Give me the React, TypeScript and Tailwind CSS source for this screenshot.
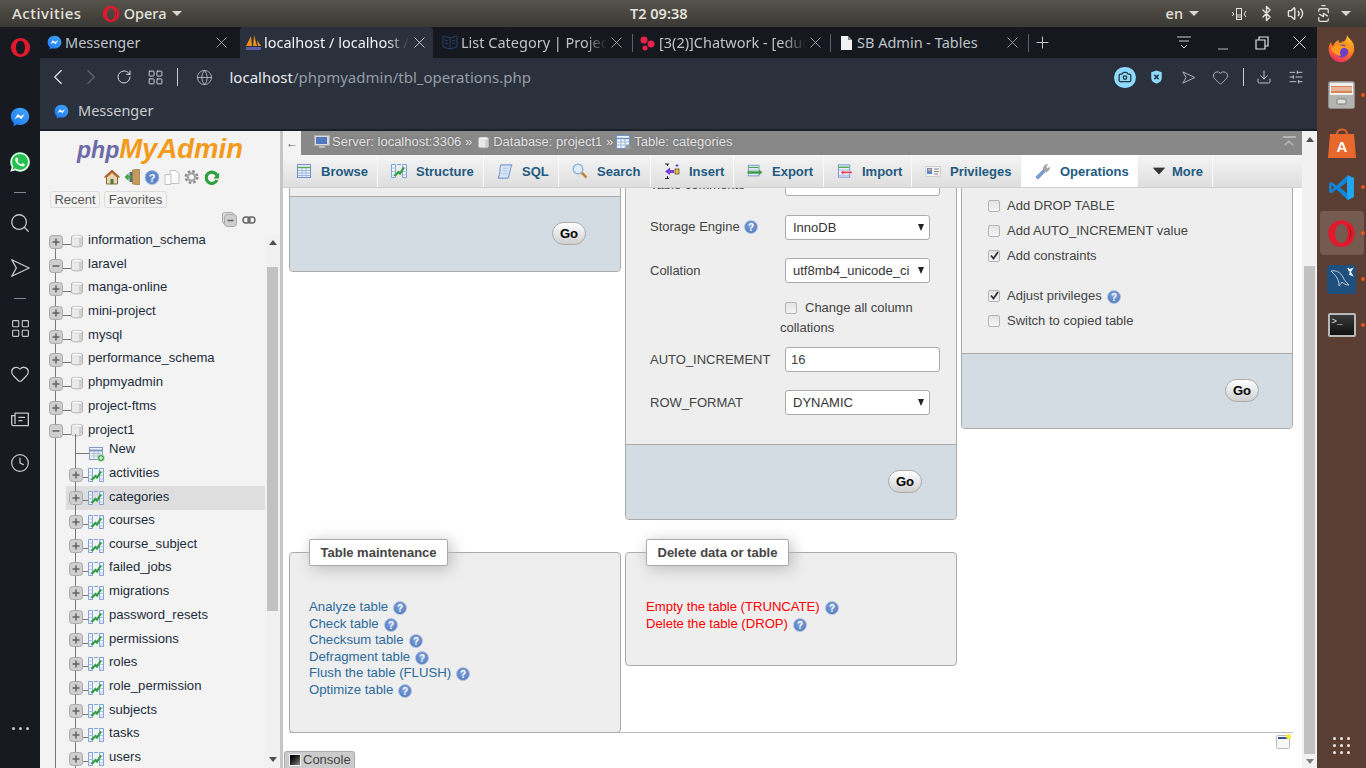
import React from "react";
import {BatteryCharging, Bluetooth, Camera, ChevronLeft, ChevronRight, ChevronUp, Clock4, Download, Globe, Heart, LayoutGrid, Minus, Plus, RotateCw, Search, SlidersHorizontal, Volume2, X} from "lucide-react";
import {FaWhatsapp} from "react-icons/fa";

const Opera = ({size, hole = false}: {size: number; hole?: boolean}) => (
    <svg width={size} height={size} viewBox="0 0 24 24" className="shrink-0">
        <path fillRule="evenodd" fill="#e0192d" d="M12 1a11 11 0 1 0 0 22a11 11 0 1 0 0-22zM12 4.2c-3.2 0-5.2 3.6-5.2 7.8s2 7.8 5.2 7.8 5.2-3.6 5.2-7.8-2-7.8-5.2-7.8z"/>
        {hole && <path fill="#a80f20" d="M17 4.5c2 2 3.2 4.5 3.2 7.5s-1.200 5.500-3.200 7.500c1.500-2 2-4.500 2-7.500s-.5-5.500-2-7.500z"/>}
    </svg>
);

const MessengerIcon = ({size}: {size: number}) => (
    <svg width={size} height={size} viewBox="0 0 24 24" className="shrink-0">
        <defs>
            <linearGradient id="msg" x1="0" y1="1" x2="0.8" y2="0">
                <stop offset="0" stopColor="#1e78f5"/>
                <stop offset="1" stopColor="#3fa2fb"/>
            </linearGradient>
        </defs>
        <path fill="url(#msg)" d="M12 1C5.800 1 1 5.500 1 11.400c0 3.100 1.300 5.700 3.400 7.500V23l3.600-2c1.300.4 2.600.6 4 .6 6.200 0 11-4.500 11-10.200S18.200 1 12 1z"/>
        <path fill="#fff" d="M5.400 14.600l4-6.200 3.400 2.700 4.800-2.700-4 6.200-3.400-2.700z"/>
    </svg>
);

const SendIcon = ({size, color}: {size: number; color: string}) => (
    <svg width={size} height={size} viewBox="0 0 24 24" fill="none" stroke={color} strokeWidth="1.500" strokeLinejoin="round" className="shrink-0">
        <path d="M3 3l19 9-19 9 5-9z"/>
    </svg>
);

const NewsIcon = () => (
    <svg width="20" height="20" viewBox="0 0 24 24" fill="none" stroke="#c3c7cd" strokeWidth="1.600" strokeLinejoin="round">
        <path d="M6 5h16v15H4a2 2 0 0 1-2-2V8h4zM6 8v10"/>
        <path d="M10 10h8M10 14h5"/>
    </svg>
);

const SideSep = () => <div className="w-3 h-px bg-[#7e8794]"/>;

const LeftRail = () => (
    <div className="w-10 shrink-0 bg-[#171b21] flex flex-col items-center">
        <div className="mt-[10px]"><Opera size={21}/></div>
        <div className="mt-[49px]"><MessengerIcon size={20}/></div>
        <div className="mt-[25px] w-[20px] h-[20px] rounded-full bg-[#25c04d] flex items-center justify-center">
            <FaWhatsapp size={22} color="#f4f4f4" className="shrink-0"/>
        </div>
        <div className="mt-[20px]"><SideSep/></div>
        <Search size={22} color="#c3c7cd" strokeWidth={1.4} className="mt-[19px]"/>
        <div className="mt-[23px]"><SendIcon size={22} color="#c3c7cd"/></div>
        <div className="mt-[19px]"><SideSep/></div>
        <LayoutGrid size={21} color="#c3c7cd" strokeWidth={1.3} className="mt-[18.500px]"/>
        <Heart size={20} color="#c3c7cd" strokeWidth={1.5} className="mt-[25.500px]"/>
        <div className="mt-[25px]"><NewsIcon/></div>
        <Clock4 size={20} color="#c3c7cd" strokeWidth={1.5} className="mt-[24px]"/>
        <div className="mt-[254px] flex gap-[4px]">
            <span className="w-[3px] h-[3px] rounded-full bg-[#c3c7cd]"/>
            <span className="w-[3px] h-[3px] rounded-full bg-[#c3c7cd]"/>
            <span className="w-[3px] h-[3px] rounded-full bg-[#c3c7cd]"/>
        </div>
    </div>
);

const PmaSail = () => (
    <svg width="17" height="17" viewBox="0 0 17 17" className="shrink-0">
        <path fill="#e8901c" d="M1 12L6 2l1 10zM8 12l1-11 3 11zM13 12l-1-6 4 6z"/>
        <path fill="#5a5fa0" d="M1 13h15v3H1z"/>
    </svg>
);

const BookIcon = () => (
    <svg width="17" height="17" viewBox="0 0 17 17" fill="none" stroke="#26406e" strokeWidth="1" className="shrink-0">
        <path d="M1 2l7 2 7-2v11l-7 2-7-2zM8 4v11M3 6l3 1M3 9l3 1M10 7l3-1M10 10l3-1"/>
    </svg>
);

const ChatworkIcon = () => (
    <svg width="16" height="16" viewBox="0 0 16 16" className="shrink-0">
        <circle cx="4" cy="5" r="3.500" fill="#e8234a"/>
        <circle cx="11" cy="9" r="3.500" fill="#e8234a"/>
        <circle cx="5" cy="13" r="2.500" fill="#e8234a"/>
    </svg>
);

const FileIcon = () => (
    <svg width="11" height="14" viewBox="0 0 11 14" className="shrink-0">
        <path fill="#f1f2f3" d="M0 0h7l4 4v10H0z"/>
        <path fill="#15181e" d="M7 0v4h4z" opacity=".5"/>
    </svg>
);

type TabProps = {width: string; icon: React.ReactNode; title: string; active?: boolean; sep?: boolean; gap: string; pad: string; textW: string; fade?: boolean};

const Tab = ({width, icon, title, active, sep, gap, pad, textW, fade = true}: TabProps) => (
    <div className={`${width} ${pad} h-full shrink-0 flex items-center ${active ? "bg-[#2a303c] rounded-t-[4px]" : ""} relative`}>
        {icon}
        <span className={`${gap} ${textW} overflow-hidden whitespace-nowrap text-[14.500px] ${active ? "text-[#f1f2f4]" : "text-[#bfc3c9]"} ${fade ? "[mask-image:linear-gradient(90deg,#000_85%,transparent)]" : ""}`}>{title}</span>
        <X size={19} strokeWidth={1} color={active ? "#e8eaec" : "#b5b9c0"} className="ml-auto -mr-[2px] shrink-0"/>
        {sep && <span className="absolute right-0 top-[7px] h-[18px] w-px bg-[#5b6069]"/>}
    </div>
);

const TabStrip = () => (
    <div className="h-[31px] shrink-0 bg-[#15181e] flex items-center">
        <Tab width="w-[200px]" pad="pl-[7px] pr-[11px]" gap="ml-[3px]" textW="w-[80px]" icon={<MessengerIcon size={15}/>} title="Messenger" fade={false}/>
        <Tab width="w-[193px]" pad="pl-[5px] pr-[6px]" gap="ml-[2px]" textW="w-[145px]" icon={<PmaSail/>} title="localhost / localhost / project1" active/>
        <Tab width="w-[200px]" pad="pl-[9px] pr-[9px]" gap="ml-[2px]" textW="w-[146px]" icon={<BookIcon/>} title="List Category | Project1" sep/>
        <Tab width="w-[198px]" pad="pl-[7px] pr-[8px]" gap="ml-[3px]" textW="w-[147px]" icon={<ChatworkIcon/>} title="[3(2)]Chatwork - [education]" sep/>
        <Tab width="w-[198px]" pad="pl-[10px] pr-[9px]" gap="ml-[5px]" textW="w-[130px]" icon={<FileIcon/>} title="SB Admin - Tables" sep fade={false}/>
        <Plus size={19} strokeWidth={1.1} color="#dfe1e4" className="ml-[4px]"/>
        <div className="ml-auto flex items-center pr-[6.500px]">
            <svg width="16" height="16" viewBox="0 0 16 16" fill="none" stroke="#c9ccd1" strokeWidth="1">
                <path d="M1 2h14M3 6h10M5 10l3 3 3-3"/>
            </svg>
            <Minus size={16} strokeWidth={1.2} color="#dfe1e4" className="ml-[23px] translate-y-[6px]"/>
            <svg width="14" height="14" viewBox="0 0 14 14" fill="none" stroke="#dfe1e4" strokeWidth="1.200" className="ml-[24px]">
                <path d="M1 4h9v9H1zM4 4V1h9v9h-3"/>
            </svg>
            <X size={23} strokeWidth={1} color="#e8eaec" className="ml-[18.500px]"/>
        </div>
    </div>
);

const AddressBar = () => (
    <div className="h-[38px] shrink-0 flex items-center">
        <ChevronLeft size={26} strokeWidth={1.1} color="#e3e5e8" className="ml-[5px]"/>
        <ChevronRight size={26} strokeWidth={1.1} color="#5f6672" className="ml-[7px]"/>
        <RotateCw size={16} strokeWidth={1.4} color="#e3e5e8" className="ml-[12px]"/>
        <LayoutGrid size={17} strokeWidth={1.2} color="#e3e5e8" className="ml-[14.500px]"/>
        <span className="ml-[13.500px] w-px h-[18px] bg-[#c8ccd2]"/>
        <Globe size={17} strokeWidth={1.1} color="#c5c9cf" className="ml-[18px]"/>
        <span className="ml-[16.500px] text-[15px] whitespace-nowrap text-[#e9ebee]">localhost<span className="text-[#969ca6]">/phpmyadmin/tbl_operations.php</span></span>
        <div className="ml-auto flex items-center pr-[13px]">
            <span className="w-[22px] h-[21px] rounded-full bg-[#8edbff] flex items-center justify-center">
                <Camera size={14} strokeWidth={2.2} color="#26313f"/>
            </span>
            <span className="ml-[14.500px] flex">
                <svg width="13" height="14" viewBox="0 0 14 16"><path fill="#8edbff" d="M7 .5l6 2v6.500c0 3.500-3 5.500-6 6.500-3-1-6-3-6-6.500V2.500z"/><path stroke="#26313f" strokeWidth="1.800" d="M4.500 5.500l5 5M9.500 5.500l-5 5"/></svg>
            </span>
            <span className="ml-[18px] flex"><SendIcon size={15} color="#b4b9c1"/></span>
            <Heart size={17} strokeWidth={1.1} color="#c9ccd1" className="ml-[16px]"/>
            <span className="ml-[14px] w-px h-[18px] bg-[#c8ccd2]"/>
            <Download size={16} strokeWidth={1.2} color="#e3e5e8" className="ml-[11.500px]"/>
            <SlidersHorizontal size={16} strokeWidth={1.2} color="#e3e5e8" className="ml-[16.500px]"/>
        </div>
    </div>
);

const BookmarkBar = () => (
    <div className="h-[34px] shrink-0 flex items-center pl-[14px] pb-[4px]">
        <MessengerIcon size={15}/>
        <span className="ml-[9px] text-[14.500px] text-[#c9ccd1]">Messenger</span>
    </div>
);

const PlusBox = ({open}: {open?: boolean}) => (
    <svg width="14" height="14" viewBox="0 0 14 14" className="shrink-0 relative">
        <rect x=".5" y=".5" width="13" height="13" rx="3" fill="#cfcfcf" stroke="#a9a9a9"/>
        <path d="M3.500 7h7" stroke="#666" strokeWidth="1.600"/>
        {!open && <path d="M7 3.500v7" stroke="#666" strokeWidth="1.600"/>}
    </svg>
);

const DbIcon = ({size = 12}: {size?: number}) => (
    <svg width={size} height={size + 2} viewBox="0 0 12 14" className="shrink-0 relative">
        <path d="M.5 2.500C.5 1.200 11.500 1.200 11.500 2.500v9c0 1.800-11 1.800-11 0z" fill="#eaeaea" stroke="#b5b5b5"/>
        <ellipse cx="6" cy="2.700" rx="5" ry="1.500" fill="#fafafa" stroke="#c5c5c5" strokeWidth=".6"/>
        <path d="M8 4v8l3-.6V4z" fill="#cfcfcf"/>
    </svg>
);

const StructIcon = ({size = 16}: {size?: number}) => (
    <svg width={size} height={size} viewBox="0 0 16 16" className="shrink-0 relative">
        <path d="M.5 1.500h4v13h-4zM11.500 1.500h4v13h-4z" fill="#f4f8ff" stroke="#7ea0d8"/>
        <path d="M.5 5h4M.5 8.500h4M.5 12h4M11.500 5h4M11.500 8.500h4M11.500 12h4" stroke="#a9c0e4"/>
        <path d="M6 1.500h4" stroke="#7ea0d8"/>
        <path d="M3.500 13l4-4 1.500 1.500 4-6" fill="none" stroke="#2f9e3f" strokeWidth="2.200"/>
    </svg>
);

const NewTableIcon = () => (
    <svg width="16" height="16" viewBox="0 0 16 16" className="shrink-0 relative">
        <rect x=".5" y="1.500" width="13" height="12" fill="#f2f5fb" stroke="#7f98c4"/>
        <path d="M.5 4.500h13" stroke="#7f98c4" strokeWidth="2"/>
        <path d="M2 7.500h10M2 10h10M5 5v8M9 5v8" stroke="#aab9d3"/>
        <circle cx="12" cy="12" r="3.500" fill="#35a24a" stroke="#e8f5ea" strokeWidth=".6"/>
        <path d="M10 12h4M12 10v4" stroke="#fff" strokeWidth="1"/>
    </svg>
);

const LINE = "absolute w-px bg-[#777]";

type TreeRowProps = {name: string; open?: boolean; first?: boolean};

const DbRow = ({name, open, first}: TreeRowProps) => (
    <div className="relative h-[23.7px] flex items-center pl-[9px]">
        <span className={`${LINE} left-[15px] bottom-0 ${first ? "top-[50%]" : "top-0"}`}/>
        <span className="absolute left-[20px] top-[15px] h-px w-[12px] bg-[#777]"/>
        <div className="flex items-center translate-y-[1px]"><PlusBox open={open}/></div>
        <span className="ml-[8px]"><DbIcon/></span>
        <span className="ml-[5px] -translate-y-[1px] text-[13.100px] text-[#1d2b3a] whitespace-nowrap">{name}</span>
    </div>
);

const TableRow = ({name, active}: {name: string; active?: boolean}) => (
    <div className="relative h-[23.7px] flex items-center pl-[29px]">
        <span className={`${LINE} left-[15px] top-0 bottom-0`}/>
        {active && <span className="absolute left-[26px] right-0 top-[1px] -bottom-[1px] bg-[#dedede]"/>}
        <span className={`${LINE} left-[35px] top-0 bottom-0`}/>
        <span className="absolute left-[40px] top-[15px] h-px w-[10px] bg-[#777]"/>
        <div className="flex items-center translate-y-[1px]"><PlusBox/></div>
        <span className="ml-[5px] translate-y-[1px]"><StructIcon/></span>
        <span className={`relative ml-[5px] ${active ? "" : "-translate-y-[1px]"} text-[13.100px] text-[#1d2b3a] whitespace-nowrap`}>{name}</span>
    </div>
);

const NavScrollbar = () => (
    <div className="w-[15px] shrink-0 bg-[#f1f1f1] flex flex-col items-center">
        <span className="mt-[5px] w-0 h-0 border-x-[4px] border-x-transparent border-b-[5px] border-b-[#505050]"/>
        <div className="mt-[22px] w-[11px] h-[344px] bg-[#c1c1c1]"/>
        <span className="mt-[146px] w-0 h-0 border-x-[4px] border-x-transparent border-t-[5px] border-t-[#505050]"/>
    </div>
);

const NavToolbar = () => (
    <div className="mt-[5px] flex items-center h-[16px] translate-x-[1.500px]">
        <svg width="17" height="16" viewBox="0 0 17 16"><path d="M8.500 1L1 8h2v7h11V8h2z" fill="#e6d5b0" stroke="#8a6a3a"/><path d="M8.500 1L1 8h3l4.500-4L13 8h3z" fill="#b8642c"/><path d="M7 10h3v5H7z" fill="#4f7a3a"/></svg>
        <svg width="17" height="16" viewBox="0 0 17 16" className="ml-[3px]"><path d="M9 1l7-1v16l-7-1z" fill="#c89a5a" stroke="#8a6a3a" strokeWidth=".6"/><path d="M9 3H6v10h3" fill="#5a6a7a"/><path d="M1 8l4-4v2.500h3v3H5V12z" fill="#46a648"/></svg>
        <svg width="15" height="15" viewBox="0 0 15 15" className="ml-[4px]"><circle cx="7.500" cy="7.500" r="7" fill="#5f86c8" stroke="#a9bfe2"/><text x="7.500" y="11.500" textAnchor="middle" fontSize="11" fontWeight="700" fill="#fff" fontFamily="Liberation Sans">?</text></svg>
        <svg width="17" height="17" viewBox="0 0 17 17" className="ml-[4px]" fill="#fafafa" stroke="#c2c2c2"><path d="M6.500 1.500h6l3 3v10h-9z"/><path d="M1.500 5.500h6v10h-6z"/></svg>
        <svg width="16" height="16" viewBox="0 0 24 24" className="ml-[3px]" fill="none"><circle cx="12" cy="12" r="8" stroke="#8c8c8c" strokeWidth="5" strokeDasharray="3.500 2.800"/><circle cx="12" cy="12" r="5.500" stroke="#a8a8a8" strokeWidth="3.500"/></svg>
        <svg width="15" height="15" viewBox="0 0 24 24" className="ml-[5px]" fill="none" stroke="#2e9f3e" strokeWidth="5"><path d="M20 9a9 9 0 1 0 0 7"/><path fill="#2e9f3e" strokeWidth="1" d="M23 5v8h-8z"/></svg>
    </div>
);

const NavPanel = () => (
    <div className="w-[240px] shrink-0 bg-[#f3f3f3] flex flex-col overflow-hidden">
        <div className="h-[104px] shrink-0 flex flex-col items-center font-['Liberation_Sans',Arial,sans-serif]">
            <div className="mt-[1px] h-[32px] flex items-baseline pt-[3px] font-bold italic leading-none whitespace-nowrap">
                <span className="text-[23px] text-[#6c6aa8]">php</span>
                <span className="text-[27.500px] text-[#f49a1a]">MyAdmin</span>
            </div>
            <NavToolbar/>
            <div className="self-start ml-[10px] mt-[6px] flex gap-1 text-[13px] text-[#555] leading-none">
                <span className="h-[17px] w-[50px] flex items-center justify-center border border-[#dcdcdc] rounded-[3px]">Recent</span>
                <span className="h-[17px] w-[63px] flex items-center justify-center border border-[#dcdcdc] rounded-[3px]">Favorites</span>
            </div>
            <div className="self-end mr-[24px] mt-[4px] flex items-center gap-[5px]">
                <svg width="15" height="15" viewBox="0 0 15 15"><rect x=".5" y=".5" width="11" height="11" rx="2" fill="#ddd" stroke="#aaa"/><rect x="2.500" y="2.500" width="12" height="12" rx="3" fill="#cfcfcf" stroke="#a9a9a9"/><path d="M5.500 8.500h6" stroke="#666" strokeWidth="1.600"/></svg>
                <svg width="14" height="8" viewBox="0 0 14 8" fill="none" stroke="#666" strokeWidth="1.500"><rect x="1" y="1" width="7" height="6" rx="3"/><rect x="6" y="1" width="7" height="6" rx="3"/></svg>
            </div>
        </div>
        <div className="flex-1 flex min-h-0 font-['Liberation_Sans',Arial,sans-serif]">
            <div className="flex-1 -mt-[6px] overflow-hidden">
                <DbRow name="information_schema" first/>
                <DbRow name="laravel" open/>
                <DbRow name="manga-online"/>
                <DbRow name="mini-project"/>
                <DbRow name="mysql"/>
                <DbRow name="performance_schema"/>
                <DbRow name="phpmyadmin"/>
                <DbRow name="project-ftms"/>
                <DbRow name="project1" open/>
                <div className="relative h-[19.500px] flex items-center pl-[49px]">
                    <span className={`${LINE} left-[15px] top-0 bottom-0`}/>
                    <span className={`${LINE} left-[35px] top-[-8px] bottom-0`}/>
                    <span className="absolute left-[35px] top-[11px] h-px w-[14px] bg-[#777]"/>
                    <span className="translate-y-[2px]"><NewTableIcon/></span>
                    <span className="ml-[4px] -translate-y-[3px] text-[13.100px] text-[#1d2b3a]">New</span>
                </div>
                {["activities", "categories", "courses", "course_subject", "failed_jobs", "migrations", "password_resets", "permissions", "roles", "role_permission", "subjects", "tasks", "users"].map(t => (
                    <TableRow key={t} name={t} active={t === "categories"}/>
                ))}
            </div>
            <NavScrollbar/>
        </div>
    </div>
);

const PmaHelp = () => (
    <svg width="14" height="14" viewBox="0 0 14 14" className="shrink-0">
        <defs>
            <radialGradient id="hlp" cx="0.5" cy="0.4" r="0.6">
                <stop offset="0" stopColor="#8aa9dd"/>
                <stop offset="1" stopColor="#4f78bd"/>
            </radialGradient>
        </defs>
        <circle cx="7" cy="7" r="6.500" fill="url(#hlp)" stroke="#b5c6e4"/>
        <text x="7" y="10.500" textAnchor="middle" fontSize="10" fontWeight="700" fill="#fff" fontFamily="Liberation Sans">?</text>
    </svg>
);

const MI = {
    browse: <svg width="16" height="16" viewBox="0 0 16 16"><rect x="1.500" y="1.500" width="13" height="13" fill="#eef3fb" stroke="#6f92cc"/><path d="M2 4.500h12" stroke="#58a55c" strokeWidth="1.500"/><path d="M2 7.500h12M2 10h12M2 12.500h12M6 5v9M10 5v9" stroke="#9fb6dc"/></svg>,
    sql: <svg width="17" height="17" viewBox="0 0 17 17"><path d="M4 1.500h12c-1.500 2-1.500 5-2.500 8s-1 5-1.500 6H1c1-1 1.500-3 2-6s0-6 1-8z" fill="#dbe6f7" stroke="#5a82c4"/><path d="M6 5h6M5.500 8h6M5 11h6" stroke="#a9c0e4"/></svg>,
    search: <svg width="16" height="16" viewBox="0 0 16 16"><path d="M9 9l5.500 5.500" stroke="#c9843a" strokeWidth="2.500"/><circle cx="6" cy="6" r="4.800" fill="#dcecfb" stroke="#8fb3d9" strokeWidth="1.400"/></svg>,
    insert: <svg width="16" height="17" viewBox="0 0 16 17" fill="none"><path d="M1 1h4M1 15.500h4M3.500 1v2M3.500 13v2" stroke="#222"/><path d="M1 8.500l5-4v2.500h4v3H6V12z" fill="#7a3fd8"/><rect x="11" y="6" width="4" height="5" fill="#f4c430" stroke="#222" strokeWidth=".6"/><path d="M13 1v3M11.500 2.500h3" stroke="#7a3fd8"/></svg>,
    exportIcon: <svg width="18" height="16" viewBox="0 0 18 16"><rect x="1.500" y="1.500" width="12" height="12" fill="#eef3fb" stroke="#6f92cc"/><path d="M2 4h11" stroke="#4aa84e" strokeWidth="1.500"/><path d="M2 7h11M2 11h11" stroke="#9fb6dc"/><path d="M1 8.500h13v-1.500l3 2.500-3 2.500v-1.500H1z" fill="#36a83e" stroke="#1d7a25" strokeWidth=".4"/></svg>,
    importIcon: <svg width="17" height="16" viewBox="0 0 17 16"><rect x="1.500" y="1.500" width="12" height="13" fill="#eef3fb" stroke="#6f92cc"/><path d="M2 4h11" stroke="#4aa84e" strokeWidth="1.500"/><path d="M2 7h11M2 12.500h11" stroke="#9fb6dc"/><path d="M16 8.500H7v-1.500l-3 2.500 3 2.500v-1.500h9z" fill="#ec2f43" stroke="#fff" strokeWidth=".3"/></svg>,
    priv: <svg width="16" height="14" viewBox="0 0 16 14"><path d="M.5 2.500h15v10h-15z" fill="#f3f3f3" stroke="#cfcfcf"/><rect x="2" y="4" width="5" height="6" fill="#5a86c8"/><circle cx="4.500" cy="5.800" r="1.400" fill="#f0b47a"/><path d="M9 5h5M9 7.500h5M9 10h4" stroke="#8a8a8a"/></svg>,
    ops: <svg width="17" height="17" viewBox="0 0 17 17"><path d="M1.500 13.500L9 6.500l2 2-7 7.500c-1.500 1-3.500-1-2.500-2.500z" fill="#7a9fd8" stroke="#5a7fb8" strokeWidth=".6"/><path d="M9 7c-1-3 1.500-6 4.500-6L11.500 3.500l1.500 2 2.500-1.500c.3 3-3 6-6.500 4z" fill="#a8a8a8" stroke="#808080" strokeWidth=".5"/></svg>,
    more: <svg width="12" height="8" viewBox="0 0 12 8"><path d="M0 1h12L6 7.500z" fill="#333"/><path d="M0 .5h12" stroke="#aaa"/></svg>,
};

type MenuTabProps = {label: string; icon: React.ReactNode; width: string; active?: boolean; textMl?: string};

const MenuTab = ({label, icon, width, active, textMl = "ml-[9px]"}: MenuTabProps) => (
    <div className={`${width} h-full flex items-center pl-[13px] border-r border-r-[#fafafa] shrink-0 ${active ? "bg-white" : "bg-linear-to-b from-[#f5f5f5] to-[#dedede]"}`}>
        <span className="w-[16px] flex items-center justify-center shrink-0">{icon}</span>
        <span className={`${textMl} text-[13px] font-bold text-[#235a81] leading-none whitespace-nowrap`}>{label}</span>
    </div>
);

const Breadcrumb = () => (
    <div className="h-[24px] shrink-0 bg-[#888] flex items-center pb-[2px] text-[13px] text-[#e4e4e4] [text-shadow:0_0_2px_#5c5c5c] whitespace-nowrap">
        <span className="w-[18px] self-stretch -mb-[2px] bg-[#f3f3f3] flex items-center justify-center text-[#666] [text-shadow:none] text-[12px]">←</span>
        <svg width="16" height="16" viewBox="0 0 16 16" className="ml-[13px]"><rect x=".5" y="1.500" width="15" height="10" fill="#dadada" stroke="#aaa"/><rect x="2" y="3" width="11" height="7" fill="#4f78c0"/><path d="M5 13h6M8 11.500V14" stroke="#bbb" strokeWidth="2"/></svg>
        <span className="ml-[2px]">Server: localhost:3306 »</span>
        <span className="ml-[6px]"><DbIcon size={11}/></span>
        <span className="ml-[4px]">Database: project1 »</span>
        <svg width="15" height="15" viewBox="0 0 15 15" className="ml-[3px]"><rect x=".5" y=".5" width="13" height="13" fill="#f3f6fb" stroke="#6f92cc"/><path d="M1 3.500h12" stroke="#6f92cc" strokeWidth="1.500"/><path d="M1 7h12M1 10h12M5 4v9M9 4v9" stroke="#9fb6dc"/><circle cx="12" cy="12" r="2.500" fill="#999"/></svg>
        <span className="ml-[3px]">Table: categories</span>
        <div className="ml-auto mr-[5px] flex flex-col items-center">
            <span className="w-[13px] h-[2px] bg-[#b4b4b4]"/>
            <ChevronUp size={16} strokeWidth={2.4} color="#b4b4b4" className="-my-[3px]"/>
        </div>
    </div>
);

const MenuBar = () => (
    <div className="h-[33px] shrink-0 flex items-center bg-linear-to-b from-[#f5f5f5] to-[#dedede] border-b border-b-[#cfcfcf] font-bold">
        <MenuTab width="w-[95px]" label="Browse" icon={MI.browse}/>
        <MenuTab width="w-[106px]" label="Structure" icon={<StructIcon/>}/>
        <MenuTab width="w-[75px]" label="SQL" icon={MI.sql}/>
        <MenuTab width="w-[92px]" label="Search" icon={MI.search}/>
        <MenuTab width="w-[83px]" label="Insert" icon={MI.insert}/>
        <MenuTab width="w-[90px]" label="Export" icon={MI.exportIcon}/>
        <MenuTab width="w-[88px]" label="Import" icon={MI.importIcon}/>
        <MenuTab width="w-[110px]" label="Privileges" icon={MI.priv}/>
        <MenuTab width="w-[116px]" label="Operations" icon={MI.ops} active/>
        <MenuTab width="w-[75px]" label="More" icon={MI.more} textMl="ml-[5px]"/>
    </div>
);

const GoBar = ({pr}: {pr: string}) => (
    <div className={`h-[75px] pb-px bg-[#d3dce3] border-t border-t-[#aaa] rounded-b-[4px] flex items-center justify-end ${pr}`}>
        <button className="w-[34px] h-[23px] rounded-[12px] border border-[#aaa] bg-linear-to-b from-white to-[#cfcfcf] text-[13px] font-bold text-black leading-none">Go</button>
    </div>
);

const Check = ({checked}: {checked?: boolean}) => (
    <span className="w-[12px] h-[12px] shrink-0 rounded-[2px] border border-[#b5b5b5] bg-linear-to-b from-[#e4e4e4] to-[#f4f4f4] flex items-center justify-center">
        {checked && <svg width="9" height="9" viewBox="0 0 9 9"><path d="M1 4.500l2.500 3L8 1" fill="none" stroke="#333" strokeWidth="1.800"/></svg>}
    </span>
);

const CheckRow = ({label, checked, help}: {label: string; checked?: boolean; help?: boolean}) => (
    <div className="h-[25px] flex items-center text-[13px] text-[#444]">
        <Check checked={checked}/>
        <span className="ml-[7px]">{label}</span>
        {help && <span className="ml-[5px] translate-y-[1px]"><PmaHelp/></span>}
    </div>
);

const FakeSelect = ({value, w}: {value: string; w: string}) => (
    <div className={`${w} h-[25px] bg-white border border-[#aaa] rounded-[3px] flex items-center pl-[7px] pr-[5px] text-[13px] text-[#333]`}>
        <span className="overflow-hidden whitespace-nowrap">{value}</span>
        <span className="ml-auto w-0 h-0 border-x-[3.500px] border-x-transparent border-t-[7px] border-t-[#222] shrink-0"/>
    </div>
);

const FakeInput = ({value}: {value?: string}) => (
    <input readOnly defaultValue={value} className="w-[155px] h-[25px] bg-white border border-[#aaa] rounded-[3px] px-[5px] text-[13px] text-[#444] outline-none"/>
);

const FormRow = ({label, mt, help, shift = "", children}: {label: string; mt: string; help?: boolean; shift?: string; children: React.ReactNode}) => (
    <div className={`${mt} flex items-center h-[25px] text-[13px] text-[#444] pl-[24px]`}>
        <div className={`w-[135px] flex items-center gap-[4px] ${shift}`}>
            <span className="whitespace-nowrap">{label}</span>
            {help && <PmaHelp/>}
        </div>
        {children}
    </div>
);

const Legend = ({title, left}: {title: string; left: string}) => (
    <div className={`absolute -top-[14px] ${left} h-[27px] px-[10.500px] flex items-center bg-white border border-[#aaa] rounded-[2px] shadow-[3px_3px_15px_#bbb] text-[13px] font-bold text-[#444] whitespace-nowrap`}>{title}</div>
);

const MaintLink = ({label, color, size = "text-[13.200px]"}: {label: string; color: string; size?: string}) => (
    <div className={`h-[16.500px] flex items-center ${size} ${color}`}>
        <span className="whitespace-nowrap">{label}</span>
        <span className="ml-[5px] translate-y-[1px]"><PmaHelp/></span>
    </div>
);

const PANEL = "w-[332px] shrink-0 bg-[#eee] border border-[#aaa] rounded-[4px]";

const Content = () => (
    <div className="flex-1 min-h-0 overflow-hidden bg-white">
        <div className="-mt-[40px] pl-[6px] flex gap-[4px] items-start w-[1010px]">
            <div className={PANEL}>
                <div className="h-[47px]"/>
                <GoBar pr="pr-[34px]"/>
            </div>
            <div className={PANEL}>
                <FormRow label="Table comments" mt="mt-[22px]" shift="translate-y-[1px]"><FakeInput/></FormRow>
                <FormRow label="Storage Engine" help mt="mt-[19px]" shift="-translate-y-[1px]"><FakeSelect value="InnoDB" w="w-[145px]"/></FormRow>
                <FormRow label="Collation" mt="mt-[18px]"><FakeSelect value="utf8mb4_unicode_ci" w="w-[145px]"/></FormRow>
                <div className="mt-[15px] h-[40px] pl-[154px] text-[13px] text-[#444] leading-[20px]">
                    <div className="flex items-center pl-[5px]"><Check/><span className="ml-[8px]">Change all column</span></div>
                    <div>collations</div>
                </div>
                <FormRow label="AUTO_INCREMENT" mt="mt-[9px]"><FakeInput value="16"/></FormRow>
                <FormRow label="ROW_FORMAT" mt="mt-[18px]"><FakeSelect value="DYNAMIC" w="w-[145px]"/></FormRow>
                <div className="h-[29px]"/>
                <GoBar pr="pr-[34px]"/>
            </div>
            <div className={PANEL}>
                <div className="pt-[44px] pb-[20px] pl-[26px]">
                    <CheckRow label="Add DROP TABLE"/>
                    <CheckRow label="Add AUTO_INCREMENT value"/>
                    <CheckRow label="Add constraints" checked/>
                    <div className="h-[15px]"/>
                    <CheckRow label="Adjust privileges" checked help/>
                    <CheckRow label="Switch to copied table"/>
                </div>
                <GoBar pr="pr-[33px]"/>
            </div>
        </div>
        <div className="mt-[32px] ml-[6px] w-[1004px] flex gap-[4px] items-start border-b border-b-[#bbb]">
            <div className={`${PANEL} h-[181px] relative -mb-px pl-[19px] pt-[46px]`}>
                <Legend title="Table maintenance" left="left-[19px]"/>
                <MaintLink label="Analyze table" color="text-[#2b6a9a]"/>
                <MaintLink label="Check table" color="text-[#2b6a9a]"/>
                <MaintLink label="Checksum table" color="text-[#2b6a9a]"/>
                <MaintLink label="Defragment table" color="text-[#2b6a9a]"/>
                <MaintLink label="Flush the table (FLUSH)" color="text-[#2b6a9a]"/>
                <MaintLink label="Optimize table" color="text-[#2b6a9a]"/>
            </div>
            <div className={`${PANEL} h-[114px] relative pl-[20px] pt-[46px]`}>
                <Legend title="Delete data or table" left="left-[20px]"/>
                <MaintLink label="Empty the table (TRUNCATE)" color="text-[#f00]" size="text-[13.100px]"/>
                <MaintLink label="Delete the table (DROP)" color="text-[#f00]" size="text-[13.100px]"/>
            </div>
        </div>
        <div className="mt-[1px] w-[1008px] flex justify-end">
            <svg width="15" height="15" viewBox="0 0 15 15"><rect x=".5" y="1.500" width="13" height="13" rx="1" fill="#f7f7f7" stroke="#bbb"/><path d="M2 4h10" stroke="#2e5597" strokeWidth="2"/><circle cx="12.500" cy="2.500" r="2.500" fill="#f2ee3a"/></svg>
        </div>
    </div>
);

const ConsoleBar = () => (
    <div className="h-[17px] shrink-0 bg-white flex items-end pl-px">
        <div className="w-[71px] h-[17px] bg-[#ccc] border border-[#aaa] border-b-0 rounded-t-[3px] flex items-center pl-[4px] text-[13px] text-[#444]">
            <span className="w-[12px] h-[12px] bg-linear-to-br from-black to-[#888] border border-[#eee] shrink-0"/>
            <span className="ml-[2px]">Console</span>
        </div>
    </div>
);

const PageScrollbar = () => (
    <div className="w-[15px] shrink-0 bg-[#f1f1f1] flex flex-col items-center">
        <span className="mt-[6px] w-0 h-0 border-x-[4px] border-x-transparent border-b-[5px] border-b-[#505050]"/>
        <div className="mt-[124px] w-[11px] h-[488px] bg-[#c1c1c1]"/>
        <span className="mt-[5px] w-0 h-0 border-x-[4px] border-x-transparent border-t-[5px] border-t-[#808080]"/>
    </div>
);

const Page = () => (
    <div className="flex-1 min-h-0 flex border-t-2 border-t-[#1b1f27] -mt-px">
        <NavPanel/>
        <div className="w-[3px] shrink-0 bg-[#c6c6c6]"/>
        <div className="flex-1 min-w-0 flex flex-col bg-white font-['Liberation_Sans',Arial,sans-serif]">
            <Breadcrumb/>
            <MenuBar/>
            <Content/>
            <ConsoleBar/>
        </div>
        <PageScrollbar/>
    </div>
);

const TopBar = () => (
    <div className="h-[27px] shrink-0 bg-linear-to-b from-[#56534a] to-[#3b3935] flex items-center text-[#e3e1dc] text-[14.500px] font-medium relative">
        <span className="ml-[12px] text-[15px] tracking-[0.5px]">Activities</span>
        <span className="ml-[20px]"><Opera size={18} hole/></span>
        <span className="ml-[4px]">Opera</span>
        <span className="ml-[6px] w-0 h-0 border-x-[5px] border-x-transparent border-t-[5px] border-t-[#d8d6d0]"/>
        <span className="absolute left-[630px] font-semibold">T2 09:38</span>
        <div className="ml-auto flex items-center">
            <span>en</span>
            <span className="ml-[6px] w-0 h-0 border-x-[5px] border-x-transparent border-t-[5px] border-t-[#d8d6d0]"/>
            <svg width="16" height="14" viewBox="0 0 16 14" fill="none" stroke="#e3e1dc" strokeWidth="1" className="ml-[32px]">
                <path d="M1 5l2 2-2 2M15 4l-2 3 2 3"/>
                <rect x="5.500" y="1.500" width="5" height="11"/>
                <path d="M6 8h4M6 10h4"/>
            </svg>
            <Bluetooth size={17} strokeWidth={2} color="#e3e1dc" className="ml-[11px]"/>
            <Volume2 size={17} strokeWidth={2} color="#e3e1dc" className="ml-[12px]"/>
            <BatteryCharging size={19} strokeWidth={1.6} color="#e3e1dc" className="ml-[10px] -rotate-90"/>
            <span className="ml-[8px] mr-[15px] w-0 h-0 border-x-[5px] border-x-transparent border-t-[5px] border-t-[#d8d6d0]"/>
        </div>
    </div>
);

const DockItem = ({children, pip, mt, active}: {children: React.ReactNode; pip?: boolean; mt: string; active?: boolean}) => (
    <div className={`${mt} relative w-[44px] h-[44px] flex items-center justify-center rounded-[4px] ${active ? "bg-[#755a4f]" : ""}`}>
        {children}
        {pip && <span className="absolute right-[-1px] top-[50%] -mt-[2px] w-[4px] h-[4px] rounded-full bg-[#e9541f]"/>}
    </div>
);

const Dock = () => (
    <div className="w-[49px] shrink-0 bg-[#5b3e33] flex flex-col items-center">
        <DockItem mt="mt-[0px]">
            <svg width="30" height="30" viewBox="0 0 30 30">
                <defs>
                    <linearGradient id="fx" x1="0.7" y1="0" x2="0.3" y2="1">
                        <stop offset="0" stopColor="#ffc928"/>
                        <stop offset=".5" stopColor="#ff7a1a"/>
                        <stop offset="1" stopColor="#ec2c6a"/>
                    </linearGradient>
                </defs>
                <path fill="url(#fx)" d="M20 1c1 3 4 4 6 8 2 5 1.500 10-2 14-3 4-8 6-12 5-5-1-9-5-10-10-1-4 0-7 2-10 0 2 1 3 2 4 1-3 3-5 6-6-1 2 0 3 2 3 3 0 6-4 6-8z"/>
                <circle cx="15" cy="17" r="6.500" fill="#6b3fc4"/>
                <path fill="#ff9a1e" d="M4 15c3-4 8-5 12-3 2 1 3 0 3-1-1-2-4-3-6-2 3-3 9-1 11 3 1 3 0 6-2 8 0-4-2-6-5-6-4 0-5 5-3 8-4 0-8-3-10-7z"/>
            </svg>
        </DockItem>
        <DockItem mt="mt-[2px]" pip>
            <svg width="27" height="28" viewBox="0 0 27 28">
                <rect x=".5" y=".5" width="26" height="27" rx="2" fill="#b3b3b0" stroke="#8c8c88"/>
                <rect x="2" y="2" width="23" height="12" fill="#efefed"/>
                <rect x="3" y="5" width="21" height="7" fill="#d9865a"/>
                <path d="M3 7h21M3 9h21" stroke="#f4e6d8"/>
                <rect x="9" y="18" width="9" height="5" rx="1" fill="#e0e0de" stroke="#7d7d7a"/>
            </svg>
        </DockItem>
        <DockItem mt="mt-[4px]">
            <svg width="28" height="30" viewBox="0 0 28 30">
                <path d="M9 6c0-6 10-6 10 0" fill="none" stroke="#d8622a" strokeWidth="2"/>
                <path d="M2 6h24l2 24H0z" fill="#e8682c"/>
                <text x="14" y="24" textAnchor="middle" fontSize="15" fontWeight="700" fill="#fff" fontFamily="Liberation Sans">A</text>
            </svg>
        </DockItem>
        <DockItem mt="mt-0" pip>
            <svg width="27" height="27" viewBox="0 0 24 24">
                <path fillRule="evenodd" fill="#0f86d8" d="M17.500 1L7.500 10.500 3 7 1 8v8l2 1 4.500-3.500L17.500 23 23 20.500v-17zM17 7l-6.500 5 6.500 5zM3 9.500L5.500 12 3 14.500z"/>
                <path fill="#23a6f0" d="M17.500 1L23 3.500v17L17.500 23 17 17V7z"/>
            </svg>
        </DockItem>
        <DockItem mt="mt-[2px]" pip active><Opera size={29} hole/></DockItem>
        <DockItem mt="mt-[2px]" pip>
            <svg width="29" height="29" viewBox="0 0 29 29">
                <rect width="29" height="29" rx="3" fill="#1f4f7c"/>
                <path d="M4 6c5-1 9 1 12 6 1 3 3 5 6 8-3 0-5-1-7-3-1 2-2 3-3 4 0-3 0-5-2-8-1-2-3-4-6-7z" fill="none" stroke="#c9d6e2" strokeWidth=".9"/>
                <path d="M21 3l1 2 3-1-2 3 2 3-3-1" fill="none" stroke="#eef2f6" strokeWidth="1.500"/>
            </svg>
        </DockItem>
        <DockItem mt="mt-[2px]" pip>
            <div className="w-[28px] h-[24px] rounded-[2px] border-2 border-[#b9b9b9] bg-linear-to-b from-[#3a3a3a] to-[#111] text-[#e8e8e8] text-[9px] leading-none font-['Liberation_Mono',monospace] pl-[2px] pt-[3px]">&gt;_</div>
        </DockItem>
        <div className="mt-[390px] grid grid-cols-3 gap-[4px]">
            {Array.from({length: 9}).map((_, i) => <span key={i} className="w-[3px] h-[3px] rounded-full bg-[#f1ece9]"/>)}
        </div>
    </div>
);

const App = () => (
    <div className="w-[1366px] h-[768px] overflow-hidden flex flex-col font-['Noto_Sans',sans-serif]">
        <TopBar/>
        <div className="flex-1 min-h-0 flex">
            <LeftRail/>
            <div className="flex-1 min-w-0 flex flex-col bg-[#2a303c]">
                <TabStrip/>
                <AddressBar/>
                <BookmarkBar/>
                <Page/>
            </div>
            <Dock/>
        </div>
    </div>
);

export default App;
